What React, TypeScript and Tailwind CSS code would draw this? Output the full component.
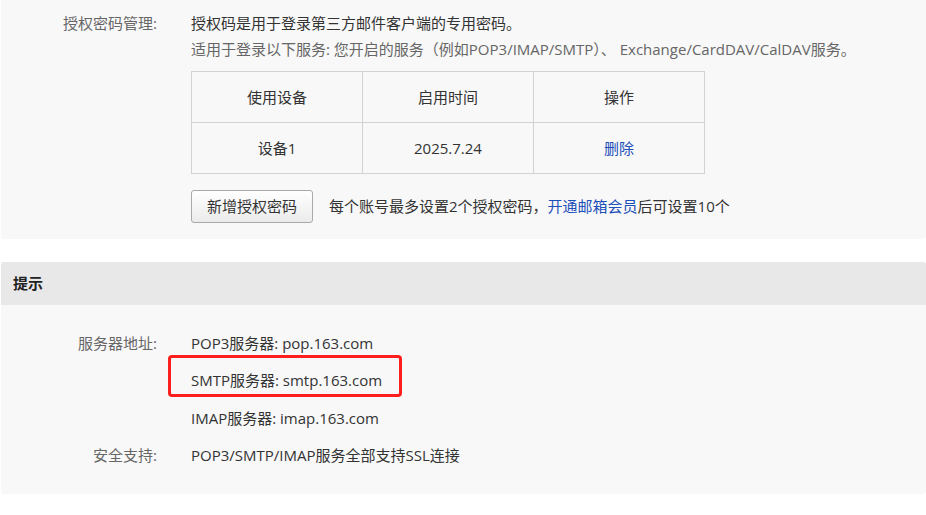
import React from 'react';

const font = { fontFamily: '"Open Sans", "Noto Sans CJK SC", sans-serif' };

const App: React.FC = () => {
  const servers = [
    { label: '服务器地址:', value: 'POP3服务器: pop.163.com' },
    { label: '', value: 'SMTP服务器: smtp.163.com', marked: true },
    { label: '', value: 'IMAP服务器: imap.163.com' },
    { label: '安全支持:', value: 'POP3/SMTP/IMAP服务全部支持SSL连接' },
  ];

  return (
    <div className="min-h-[515px] w-[926px] bg-white text-[15px] text-[#333]" style={font}>
      {/* 授权密码 */}
      <section className="ml-[1px] rounded-b-[3px] bg-[#f8f8f8] pt-[10px] pb-[16px]">
        <div className="flex">
          <div className="w-[156px] shrink-0 text-right leading-[26px] text-[#666]">授权密码管理:</div>
          <div className="ml-[34px]">
            <p className="leading-[26px]">授权码是用于登录第三方邮件客户端的专用密码。</p>
            <p className="leading-[26px] text-[#666]">
              适用于登录以下服务: 您开启的服务（例如POP3/IMAP/SMTP）、 Exchange/CardDAV/CalDAV服务。
            </p>

            <table className="mt-[9px] border-collapse text-center">
              <thead>
                <tr className="h-[51px]">
                  <th className="w-[171px] border border-[#d2d2d2] font-normal">使用设备</th>
                  <th className="w-[171px] border border-[#d2d2d2] font-normal">启用时间</th>
                  <th className="w-[171px] border border-[#d2d2d2] font-normal">操作</th>
                </tr>
              </thead>
              <tbody>
                <tr className="h-[51px]">
                  <td className="border border-[#d2d2d2]">设备1</td>
                  <td className="border border-[#d2d2d2]">2025.7.24</td>
                  <td className="border border-[#d2d2d2] text-[#1d4fb8]">删除</td>
                </tr>
              </tbody>
            </table>

            <div className="mt-[16px] flex items-center">
              <button className="h-[33px] w-[122px] rounded-[3px] border border-[#a9a9a9] bg-gradient-to-b from-white to-[#ebebeb] text-[#333]">
                新增授权密码
              </button>
              <span className="ml-[16px]">
                每个账号最多设置2个授权密码，<span className="text-[#1d4fb8]">开通邮箱会员</span>后可设置10个
              </span>
            </div>
          </div>
        </div>
      </section>

      {/* 提示 */}
      <section className="mt-[23px] ml-[1px] overflow-hidden rounded-[3px] bg-[#f8f8f8]">
        <div className="flex h-[43px] items-center bg-[#e8e8e8] pl-[12px] font-bold text-[#222]">提示</div>
        <div className="pt-[19px] pb-[20px]">
          {servers.map((row, i) => (
            <div key={i} className="flex h-[37.6px] items-center">
              <div className="w-[156px] shrink-0 text-right text-[#666]">{row.label}</div>
              <div className="relative ml-[34px]">
                {row.value}
                {row.marked && (
                  <span className="pointer-events-none absolute top-[-14px] left-[-23px] h-[42px] w-[234px] rounded-[4px] border-[3px] border-[#ff1e1e]" />
                )}
              </div>
            </div>
          ))}
        </div>
      </section>
    </div>
  );
};

export default App;
